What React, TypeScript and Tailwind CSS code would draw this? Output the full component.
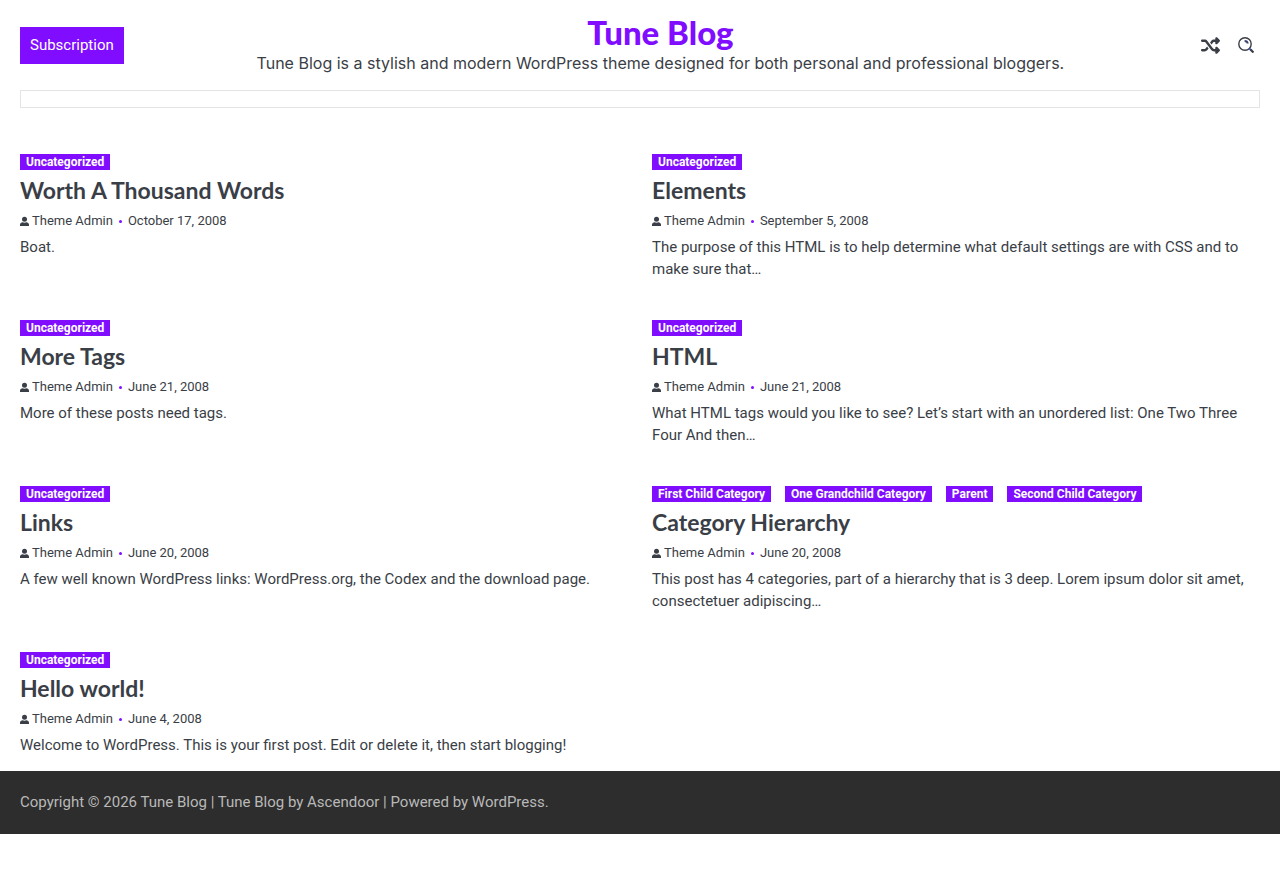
import React from "react";

type Post = {
  title: string;
  date: string;
  excerpt: string;
  categories: string[];
};

const posts: Post[] = [
  {
    title: "Worth A Thousand Words",
    date: "October 17, 2008",
    excerpt: "Boat.",
    categories: ["Uncategorized"],
  },
  {
    title: "Elements",
    date: "September 5, 2008",
    excerpt:
      "The purpose of this HTML is to help determine what default settings are with CSS and to make sure that…",
    categories: ["Uncategorized"],
  },
  {
    title: "More Tags",
    date: "June 21, 2008",
    excerpt: "More of these posts need tags.",
    categories: ["Uncategorized"],
  },
  {
    title: "HTML",
    date: "June 21, 2008",
    excerpt:
      "What HTML tags would you like to see? Let’s start with an unordered list: One Two Three Four And then…",
    categories: ["Uncategorized"],
  },
  {
    title: "Links",
    date: "June 20, 2008",
    excerpt:
      "A few well known WordPress links: WordPress.org, the Codex and the download page.",
    categories: ["Uncategorized"],
  },
  {
    title: "Category Hierarchy",
    date: "June 20, 2008",
    excerpt:
      "This post has 4 categories, part of a hierarchy that is 3 deep. Lorem ipsum dolor sit amet, consectetuer adipiscing…",
    categories: [
      "First Child Category",
      "One Grandchild Category",
      "Parent",
      "Second Child Category",
    ],
  },
  {
    title: "Hello world!",
    date: "June 4, 2008",
    excerpt:
      "Welcome to WordPress. This is your first post. Edit or delete it, then start blogging!",
    categories: ["Uncategorized"],
  },
];

const ShuffleIcon: React.FC = () => (
  <svg viewBox="0 0 512 512" className="size-[19px]" fill="currentColor" aria-hidden="true">
    <path d="M403.8 34.4c12-5 25.7-2.2 34.9 6.9l64 64c6 6 9.4 14.1 9.4 22.6s-3.400 16.600-9.400 22.600l-64 64c-9.200 9.200-22.900 11.900-34.900 6.900S384 204.900 384 192v-32h-32c-10.100 0-19.600 4.700-25.600 12.800L284 229.300 244 176l31.200-41.600C293.300 110.200 321.800 96 352 96h32V64c0-12.900 7.800-24.600 19.800-29.600zM164 282.700 204 336l-31.200 41.600C154.700 401.800 126.200 416 96 416H32c-17.700 0-32-14.300-32-32s14.300-32 32-32h64c10.100 0 19.600-4.700 25.600-12.800L164 282.700zM438.600 470.600c-9.200 9.200-22.900 11.900-34.900 6.900S384 460.900 384 448v-32h-32c-30.200 0-58.700-14.200-76.800-38.400L121.600 172.800c-6-8.100-15.500-12.800-25.600-12.800H32c-17.700 0-32-14.300-32-32s14.300-32 32-32h64c30.200 0 58.700 14.200 76.800 38.400l153.600 204.800c6 8.100 15.500 12.800 25.600 12.800h32v-32c0-12.900 7.800-24.600 19.800-29.600s25.700-2.200 34.900 6.900l64 64c6 6 9.400 14.100 9.400 22.600s-3.400 16.600-9.400 22.600l-64 64z" />
  </svg>
);

const SearchIcon: React.FC = () => (
  <svg viewBox="0 0 16 16" className="size-4" fill="none" aria-hidden="true">
    <circle cx="7" cy="7" r="6.200" stroke="#3a3e46" strokeWidth="1.400" />
    <path d="M6.600 3.900c1.700 0 2.900 1 3.100 2.600" stroke="#3b4470" strokeWidth="2" />
    <path d="M11.300 11.300l2 2" stroke="#3b4fc4" strokeWidth="1.800" />
    <path d="M12.500 12.500l3 3" stroke="#3a3e46" strokeWidth="2.200" />
  </svg>
);

const UserIcon: React.FC = () => (
  <svg viewBox="0 0 9 10" className="h-[10px] w-[9px]" fill="currentColor" aria-hidden="true">
    <circle cx="4.500" cy="3.200" r="2.500" />
    <path d="M0 10V8.800C0 7.200 1.300 6.400 2.600 6.200c1.200.6 2.600.6 3.800 0C7.700 6.400 9 7.200 9 8.800V10z" />
  </svg>
);

const PostCard: React.FC<{ post: Post }> = ({ post }) => (
  <article>
    <div className="flex flex-wrap gap-x-[14px] gap-y-1">
      {post.categories.map((category) => (
        <a
          key={category}
          href="#"
          className="bg-[#800dff] px-[6px] text-xs leading-4 font-bold text-white"
        >
          {category}
        </a>
      ))}
    </div>
    <h2 className="mt-1 font-['Lato',sans-serif] text-[23px] leading-8 font-bold">
      <a href="#">{post.title}</a>
    </h2>
    <div className="mt-1 flex items-center text-[13px] leading-[22px]">
      <a href="#" className="flex items-center gap-[3px]">
        <UserIcon />
        Theme Admin
      </a>
      <span className="mx-[6px] size-[3px] rounded-full bg-[#800dff]" />
      <time>{post.date}</time>
    </div>
    <p className="mt-1 text-[15px] leading-[22px]">{post.excerpt}</p>
  </article>
);

const App: React.FC = () => {
  return (
    <div className="bg-white font-['Roboto',sans-serif] text-[#3a3e46]">
      <header className="px-5">
        <div className="flex h-[90px] items-center justify-between">
          <a
            href="#"
            className="bg-[#800dff] px-[10px] py-2 text-[15px] leading-[21px] text-white"
          >
            Subscription
          </a>
          <div className="pb-[2px] text-center">
            <h1 className="font-['Lato',sans-serif] text-[33px] leading-[38px] font-black text-[#800dff]">
              <a href="#">Tune Blog</a>
            </h1>
            <p className="font-['Inter',sans-serif] text-base leading-6">
              Tune Blog is a stylish and modern WordPress theme designed for both personal and
              professional bloggers.
            </p>
          </div>
          <div className="flex items-center gap-[18px] pr-[6px] pl-1">
            <a href="#" aria-label="Random post">
              <ShuffleIcon />
            </a>
            <button type="button" aria-label="Search">
              <SearchIcon />
            </button>
          </div>
        </div>
        <nav className="h-[18px] border border-[#e4e4e4]" />
      </header>

      <main className="grid grid-cols-2 gap-x-6 gap-y-10 px-5 pt-[46px] pb-[15px]">
        {posts.map((post) => (
          <PostCard key={post.title} post={post} />
        ))}
      </main>

      <footer className="bg-[#2d2d2d] px-5 py-5 text-[15px] leading-[23px] text-[#b9b9b9]">
        Copyright © 2026 <a href="#">Tune Blog</a> | Tune Blog by <a href="#">Ascendoor</a> |
        Powered by <a href="#">WordPress</a>.
      </footer>
    </div>
  );
};

export default App;
